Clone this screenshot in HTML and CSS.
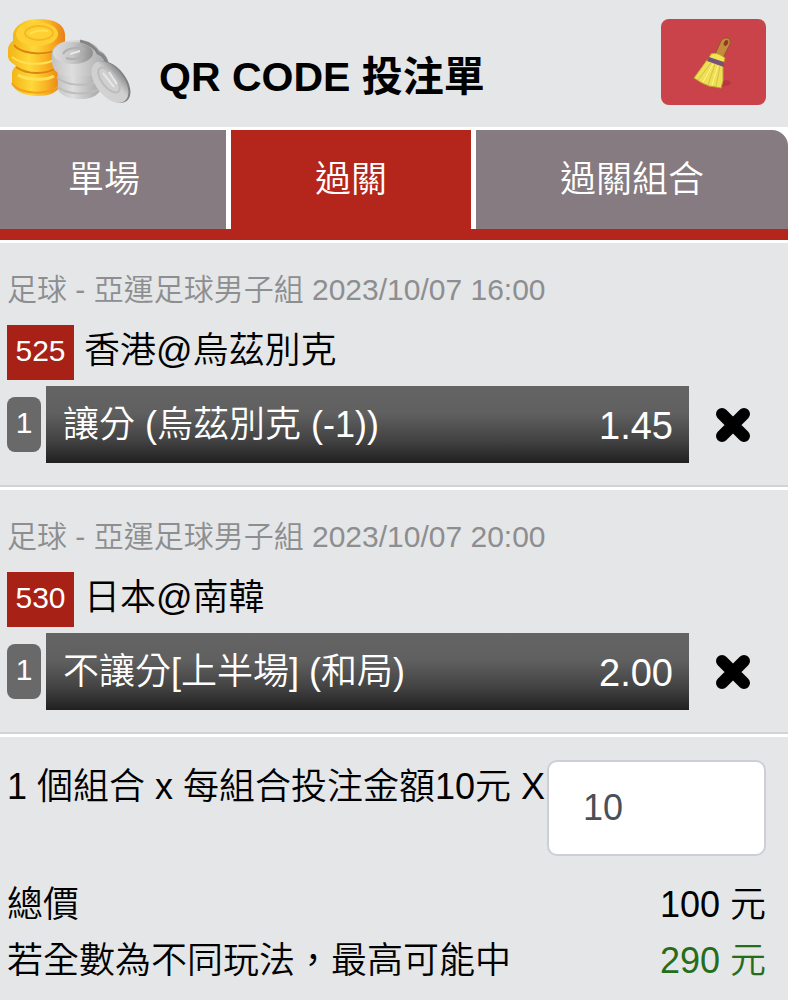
FILE: index.html
```html
<!DOCTYPE html>
<html lang="zh-Hant">
<head>
    <meta charset="UTF-8">
    <meta name="viewport" content="width=device-width, initial-scale=1">
    <title>QR CODE 投注單</title>
    <link rel="stylesheet" href="styles.css">
</head>
<body>
<div class="slip">
    <header class="header">
        <svg class="coins" viewBox="0 0 134 92" aria-hidden="true">
            <defs>
                <linearGradient id="gold" x1="0" x2="1">
                    <stop offset="0" stop-color="#f3b416"/>
                    <stop offset=".4" stop-color="#ffd83a"/>
                    <stop offset=".7" stop-color="#f9b223"/>
                    <stop offset="1" stop-color="#e87f16"/>
                </linearGradient>
                <linearGradient id="silver" x1="0" x2="1">
                    <stop offset="0" stop-color="#c3c3c3"/>
                    <stop offset=".35" stop-color="#dedede"/>
                    <stop offset="1" stop-color="#a4a4a4"/>
                </linearGradient>
                <linearGradient id="top" x1="0" x2="1">
                    <stop offset="0" stop-color="#dcdcdc"/>
                    <stop offset=".5" stop-color="#c6c6c6"/>
                    <stop offset="1" stop-color="#8e8e8e"/>
                </linearGradient>
                <linearGradient id="coin" x1="0" y1=".4" x2="1" y2=".3">
                    <stop offset="0" stop-color="#d2d2d2"/>
                    <stop offset=".6" stop-color="#cfcfcf"/>
                    <stop offset="1" stop-color="#8c8c8c"/>
                </linearGradient>
            </defs>
            <g transform="translate(0 -6)">
                <path d="M12 67C12 61 18 55 28 55h24c10 2 10 10 8 16v8c-3 7-12 10-22 10-14 0-24-5-26-13z" fill="url(#gold)"/>
                <path d="M12 76c6 12 38 13 48 2" fill="none" stroke="#f0a01c" stroke-width="2"/>
                <path d="M18 68c8 5 28 6 36 1" fill="none" stroke="#ffe052" stroke-width="3"/>
                <path d="M8 43c0-7 6-12 14-12h30c8 1 10 5 9 10v12c-4 7-14 10-25 10-16 0-28-7-28-14z" fill="url(#gold)"/>
                <path d="M16 60c11 8 30 8 42 0" fill="none" stroke="#d98612" stroke-width="2"/>
                <path d="M12 50c10 8 30 9 42 3" fill="none" stroke="#ffe052" stroke-width="2"/>
                <path d="M13 27C15 18 25 12 39 12c15 0 25 5 26 15v8c-3 9-14 13-27 13-15 0-25-5-25-12z" fill="url(#gold)"/>
                <path d="M14 38c8 11 41 12 51-2" fill="none" stroke="#dc8412" stroke-width="2"/>
                <ellipse cx="37" cy="27" rx="21" ry="12" fill="#ffd034"/>
                <ellipse cx="39" cy="26" rx="14" ry="7" fill="none" stroke="#f4b824" stroke-width="2"/>
                <path d="M30 27c6-4 11-4 18-3" fill="none" stroke="#ffe252" stroke-width="2"/>
            </g>
            <g transform="translate(0 -6)">
                <path d="M57 54h45v26c-4 10-12 12-22 12-12 0-20-4-22-10z" fill="url(#silver)"/>
                <path d="M57 70c8 9 29 10 41 4M58 80c10 8 27 8 40 3" fill="none" stroke="#bdbdbd" stroke-width="2"/>
                <path d="M52 45c2-8 12-12 25-12 13 0 19 5 22 10 6 3 11 9 10 20l-13 4c-6 4-34 4-39-2-4-2-6-8-5-20z" fill="url(#silver)"/>
                <path d="M80 34c10 2 16 8 18 12 6 2 9 7 10 15" fill="none" stroke="#858585" stroke-width="3"/>
                <ellipse cx="73" cy="46" rx="20" ry="11" fill="url(#top)"/>
                <path d="M63 47c3-6 15-8 22-4M66 51c6 2 13 1 17-2" fill="none" stroke="#b0b0b0" stroke-width="2"/>
                <path d="M70 47l10-3" stroke="#e8e8e8" stroke-width="2"/>
            </g>
            <ellipse cx="112" cy="69" rx="14" ry="24" transform="rotate(-38 112 69)" fill="#808080"/>
            <ellipse cx="110" cy="69" rx="14" ry="24" transform="rotate(-38 110 69)" fill="url(#coin)"/>
            <ellipse cx="109" cy="67" rx="7" ry="15" transform="rotate(-38 109 67)" fill="none" stroke="#bcbcbc" stroke-width="2"/>
            <path d="M103 60l11 14M109 59l8 12" stroke="#e8e8e8" stroke-width="2"/>
        </svg>
        <h1 class="title">QR CODE 投注單</h1>
        <button class="clear" type="button" aria-label="清除">
            <svg class="broom" viewBox="0 0 42 54" aria-hidden="true">
                <ellipse cx="24" cy="48" rx="14" ry="4" fill="#b8373f"/>
                <path d="M22 19l6-13c3-5 11-4 9 3l-7 14z" fill="#c38b3b" stroke="#8d5a22"/>
                <ellipse cx="33" cy="8" rx="2" ry="3" transform="rotate(25 33 8)" fill="#973426"/>
                <path d="M18 19c5-2 10 1 14 4l-2 7-15-5z" fill="#f4e450" stroke="#c2a532"/>
                <path d="M14 25l16 6 0 15-2 7-5-1-7-1-7-3-8-5z" fill="#efdf55" stroke="#c0a134"/>
                <path d="M18 28L5 45M22 29l-7 21M27 31l-4 20" fill="none" stroke="#d4c045"/>
                <path d="M20 29l-10 18M25 31l-6 19" fill="none" stroke="#fff38d"/>
                <path d="M16 22l15 5v5l-17-6z" fill="#75517c"/>
            </svg>
        </button>
    </header>

    <nav class="tabs">
        <a class="tab tab-single" href="#">單場</a>
        <a class="tab on" href="#">過關</a>
        <a class="tab tab-combo" href="#">過關組合</a>
    </nav>

    <main>
        <section class="bet">
            <div class="league">足球 - 亞運足球男子組 2023/10/07 16:00</div>
            <div class="match">
                <span class="code">525</span>
                <span class="teams">香港@烏茲別克</span>
            </div>
            <div class="pick">
                <span class="count">1</span>
                <div class="option">
                    <span>讓分 (烏茲別克 (-1))</span>
                    <span class="odds">1.45</span>
                </div>
                <button class="remove" type="button" aria-label="移除 525">
                    <svg viewBox="0 0 34 34" aria-hidden="true">
                        <path d="M6 6l22 22M28 6L6 28"/>
                    </svg>
                </button>
            </div>
        </section>

        <section class="bet">
            <div class="league">足球 - 亞運足球男子組 2023/10/07 20:00</div>
            <div class="match">
                <span class="code">530</span>
                <span class="teams">日本@南韓</span>
            </div>
            <div class="pick">
                <span class="count">1</span>
                <div class="option">
                    <span>不讓分[上半場] (和局)</span>
                    <span class="odds">2.00</span>
                </div>
                <button class="remove" type="button" aria-label="移除 530">
                    <svg viewBox="0 0 34 34" aria-hidden="true">
                        <path d="M6 6l22 22M28 6L6 28"/>
                    </svg>
                </button>
            </div>
        </section>

        <section class="summary">
            <div class="stake">
                <label for="multiple">1 個組合 x 每組合投注金額10元 X</label>
                <input id="multiple" type="text" inputmode="numeric" value="10">
            </div>
            <div class="total">
                <span>總價</span>
                <span>100 元</span>
            </div>
            <div class="total">
                <span>若全數為不同玩法，最高可能中</span>
                <span class="win">290 元</span>
            </div>
        </section>
    </main>
</div>
</body>
</html>
```
FILE: styles.css
```css
* {
    box-sizing: border-box;
}

body {
    margin: 0;
    background-color: #fff;
    color: #000;
    font-family: "Liberation Sans", "Noto Sans CJK TC", sans-serif;
    font-size: 36px;
    font-weight: 350;
}

button {
    padding: 0;
    border: 0;
    cursor: pointer;
}

.slip {
    margin-right: 11px;
}

/* header */
.header {
    display: flex;
    height: 127px;
    padding: 19px 22px 0 0;
    background-color: #e4e6e8;
}

.coins {
    width: 134px;
    height: 92px;
    margin-top: -6px;
    margin-right: 25px;
}

.title {
    flex: 1;
    margin: 32px 0 0;
    font-size: 41px;
    font-weight: bold;
    line-height: 52px;
    white-space: nowrap;
}

.clear {
    display: flex;
    align-items: center;
    justify-content: center;
    width: 105px;
    height: 86px;
    border-radius: 8px;
    background-color: #cb434a;
}

.broom {
    width: 42px;
    height: 54px;
}

/* tabs */
.tabs {
    display: grid;
    grid-template-columns: 226fr 240fr 312fr;
    gap: 5px;
    margin: 3px 0;
    border-bottom: 11px solid #b4261b;
}

.tab {
    height: 99px;
    background-color: #857b80;
    color: #fff;
    line-height: 100px;
    text-align: center;
    text-decoration: none;
    white-space: nowrap;
}

.tab-single {
    padding-right: 18px;
}

.tab-combo {
    border-top-right-radius: 16px;
}

.tab.on {
    background-color: #b4261b;
}

/* bets */
.bet {
    margin-bottom: 3px;
    padding: 24px 0 22px 7px;
    border-bottom: 2px solid #d2d3d5;
    background-color: #e4e6e8;
}

.league {
    margin-bottom: 12px;
    color: #8d8e90;
    font-size: 30px;
    line-height: 46px;
}

.match {
    display: flex;
    gap: 10px;
    margin-bottom: 6px;
}

.code {
    width: 67px;
    height: 55px;
    background-color: #a72117;
    color: #fff;
    font-size: 30px;
    line-height: 52px;
    text-align: center;
}

.teams {
    line-height: 52px;
}

.pick {
    display: flex;
    align-items: center;
}

.count {
    width: 34px;
    height: 55px;
    margin-right: 5px;
    border-radius: 8px;
    background-color: #696969;
    color: #fff;
    font-size: 30px;
    line-height: 52px;
    text-align: center;
}

.option {
    display: flex;
    flex: 1;
    justify-content: space-between;
    height: 77px;
    padding: 0 16px 0 17px;
    background-image: linear-gradient(#646464, #606060 35%, #434343 70%, #202020);
    color: #fff;
    line-height: 78px;
}

.odds {
    font-size: 38px;
    line-height: 80px;
}

.remove {
    width: 34px;
    height: 34px;
    margin: 0 38px 0 27px;
    background-color: transparent;
}

.remove svg {
    display: block;
}

.remove path {
    fill: none;
    stroke: #000;
    stroke-width: 12px;
    stroke-linecap: round;
}

/* summary */
.summary {
    padding: 23px 22px 11px 7px;
    background-color: #e4e6e8;
}

.stake {
    display: flex;
    margin-bottom: 21px;
}

.stake label {
    flex: 1;
    line-height: 54px;
    white-space: nowrap;
}

.stake input {
    width: 219px;
    height: 96px;
    padding: 0 34px;
    border: 2px solid #cdced8;
    border-radius: 10px;
    background-color: #fff;
    color: #495057;
    font: inherit;
}

.total {
    display: flex;
    justify-content: space-between;
    line-height: 56px;
}

.win {
    color: #256d1b;
}
```
